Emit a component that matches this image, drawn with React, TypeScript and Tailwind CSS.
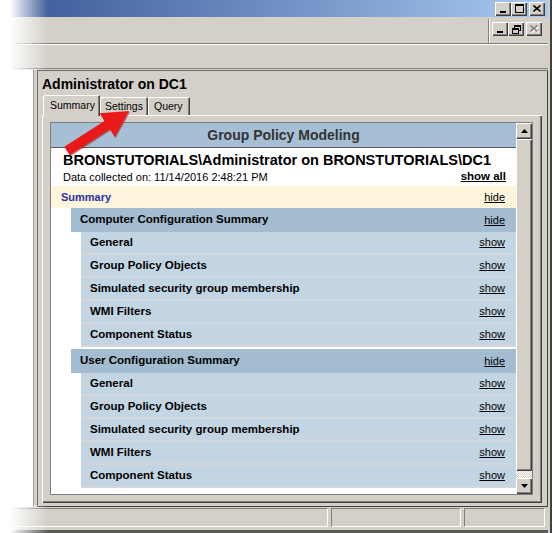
import React from "react";

// classic 3D bevels
const raised =
  "bg-[#d4d0c8] shadow-[inset_1px_1px_#ffffff,inset_-1px_-1px_#404040,inset_-2px_-2px_#808080]";
const sunken = "border border-t-[#808080] border-l-[#808080] border-b-white border-r-white";

const items = [
  "General",
  "Group Policy Objects",
  "Simulated security group membership",
  "WMI Filters",
  "Component Status",
];

function CaptionButton({ children }: { children: React.ReactNode }) {
  return (
    <div className={`w-[16px] h-[14px] flex items-center justify-center ${raised}`}>
      {children}
    </div>
  );
}

const MinGlyph = () => (
  <svg width="8" height="8" viewBox="0 0 8 8">
    <rect x="1" y="6" width="6" height="2" fill="#000" />
  </svg>
);

const MaxGlyph = () => (
  <svg width="9" height="9" viewBox="0 0 9 9">
    <rect x="0.5" y="0.5" width="8" height="8" fill="none" stroke="#000" />
    <rect x="0" y="0" width="9" height="2" fill="#000" />
  </svg>
);

const RestoreGlyph = () => (
  <svg width="9" height="9" viewBox="0 0 9 9">
    <rect x="2.5" y="0.5" width="6" height="5" fill="none" stroke="#000" />
    <rect x="2" y="0" width="7" height="2" fill="#000" />
    <rect x="0.5" y="3.5" width="6" height="5" fill="#d4d0c8" stroke="#000" />
    <rect x="0" y="3" width="7" height="2" fill="#000" />
  </svg>
);

const CloseGlyph = ({ disabled }: { disabled?: boolean }) => (
  <svg width="9" height="8" viewBox="0 0 9 8">
    {disabled && (
      <path d="M1.5 1.5 L8.5 7.5 M8.5 1.5 L1.5 7.5" stroke="#fff" strokeWidth="1.6" />
    )}
    <path
      d="M0.5 0.5 L7.5 6.5 M7.5 0.5 L0.5 6.5"
      stroke={disabled ? "#808080" : "#000"}
      strokeWidth="1.6"
    />
  </svg>
);

const Arrow = ({ up }: { up?: boolean }) => (
  <svg width="7" height="4" viewBox="0 0 7 4">
    <path d={up ? "M3.5 0 L7 4 L0 4Z" : "M0 0 L7 0 L3.5 4Z"} fill="#000" />
  </svg>
);

function Section({ title }: { title: string }) {
  return (
    <div className="ml-[20px]">
      <div className="h-[24px] flex items-center justify-between bg-[#a3bcd0] pl-[9px] pr-[11px]">
        <span className="font-bold text-[11.5px]">{title}</span>
        <span className="underline text-[11px]">hide</span>
      </div>
      <div className="ml-[10px]">
        {items.map((item) => (
          <div
            key={item}
            className="h-[23px] border-b-2 border-[#d3d7db] bg-[#c3d5e3] flex items-center justify-between pl-[9px] pr-[11px]"
          >
            <span className="font-bold text-[11.5px]">{item}</span>
            <span className="underline text-[11px]">show</span>
          </div>
        ))}
      </div>
    </div>
  );
}

export default function App() {
  return (
    <div className="relative w-[552px] h-[533px] overflow-hidden bg-[#d4d0c8] flex font-['Liberation_Sans',Arial,sans-serif] text-black">
      <div className="w-[548px] flex flex-col">
        {/* Title bar */}
        <div className="h-[17px] bg-linear-to-r from-[#3a5896] to-[#a8caf0] flex items-center justify-end gap-[2px] pr-[3px]">
          <div className="flex">
            <CaptionButton><MinGlyph /></CaptionButton>
            <CaptionButton><MaxGlyph /></CaptionButton>
          </div>
          <CaptionButton><CloseGlyph /></CaptionButton>
        </div>
        <div className="h-[2px]" />

        {/* Menu bar */}
        <div className="h-[25px] border-b border-[#808080] flex justify-end">
          <div className="border-l border-[#808080] shadow-[inset_1px_0_#ffffff] pl-[3px] pr-[6px] pt-[3px] flex gap-[2px] items-start">
            <div className="flex">
              <CaptionButton><MinGlyph /></CaptionButton>
              <CaptionButton><RestoreGlyph /></CaptionButton>
            </div>
            <CaptionButton><CloseGlyph disabled /></CaptionButton>
          </div>
        </div>

        {/* Toolbar */}
        <div className="h-[25px] border-t border-white border-b border-b-[#808080]" />

        {/* Main area */}
        <div className="h-[438px] flex pt-[1px]">
          <div className="w-[34px] bg-white border-r border-[#a0a0a0]" />
          <div className="w-[3px]" />
          <div className="w-[511px] shadow-[inset_1px_1px_#6a6a6a,inset_-1px_-1px_#404040] pt-[5px] pl-[5px]">
            <div className="text-[14px] leading-[18px] font-bold">Administrator on DC1</div>

            {/* Tabs */}
            <div className="mt-[2px] h-[20px] flex items-end pl-[1px] text-[10.5px]">
              <div className="relative z-10 -mb-[1px] h-[21px] w-[57px] bg-[#d4d0c8] rounded-t-[2px] shadow-[inset_1px_1px_#ffffff,inset_-1px_0_#404040,inset_-2px_0_#808080] pl-[7px] pt-[3px]">
                Summary
              </div>
              <div className="h-[18px] w-[48px] rounded-t-[2px] shadow-[inset_1px_1px_#ffffff,inset_-1px_0_#404040,inset_-2px_0_#808080] pl-[5px] pt-[2px]">
                Settings
              </div>
              <div className="h-[18px] w-[42px] rounded-t-[2px] shadow-[inset_1px_1px_#ffffff,inset_-1px_0_#404040,inset_-2px_0_#808080] pl-[6px] pt-[2px]">
                Query
              </div>
            </div>

            {/* Tab panel */}
            <div className={`w-[500px] h-[388px] pt-[7px] pl-[8px] ${raised}`}>
              <div className="w-[483px] h-[373px] border border-[#808080] bg-white flex">
                <div className="w-[465px] flex flex-col">
                  <div className="h-[25px] bg-[#a6bfd4] border-b border-[#5a5a5a] flex items-center justify-center text-[14px] font-bold text-[#333333]">
                    Group Policy Modeling
                  </div>
                  <div className="h-[38px] pl-[12px] pr-[10px] pt-[3px]">
                    <div className="text-[14.5px] leading-[18px] font-bold">
                      BRONSTUTORIALS\Administrator on BRONSTUTORIALS\DC1
                    </div>
                    <div className="h-[16px] flex items-center justify-between">
                      <span className="text-[11px]">Data collected on: 11/14/2016 2:48:21 PM</span>
                      <span className="text-[11.5px] font-bold underline">show all</span>
                    </div>
                  </div>
                  <div className="h-[22px] bg-[#fdf6dc] flex items-center justify-between pl-[10px] pr-[11px]">
                    <span className="text-[11px] font-bold text-[#2e2ea0]">Summary</span>
                    <span className="text-[11px] underline">hide</span>
                  </div>
                  <Section title="Computer Configuration Summary" />
                  <div className="h-[2px]" />
                  <Section title="User Configuration Summary" />
                </div>

                {/* Scrollbar */}
                <div className="w-[16px] flex flex-col">
                  <div className={`h-[16px] flex items-center justify-center ${raised}`}>
                    <Arrow up />
                  </div>
                  <div className={`h-[332px] ${raised}`} />
                  <div className="h-[7px] bg-[repeating-conic-gradient(#ffffff_0_25%,#d4d0c8_0_50%)] bg-size-[2px_2px]" />
                  <div className={`h-[16px] flex items-center justify-center ${raised}`}>
                    <Arrow />
                  </div>
                </div>
              </div>
            </div>
          </div>
        </div>

        {/* Status bar */}
        <div className="h-[21px] pt-[1px] flex gap-[3px] pl-[2px]">
          <div className={`w-[326px] h-[19px] ${sunken}`} />
          <div className={`w-[130px] h-[19px] ${sunken}`} />
          <div className={`w-[81px] h-[19px] ${sunken}`} />
        </div>
        <div className="h-[2px]" />
        <div className="h-[3px] bg-[#5a5a5a]" />
      </div>

      {/* Window frame, right edge */}
      <div className="w-[4px] border-r-2 border-[#404040]" />

      {/* Faded left edge of the screenshot */}
      <div className="absolute left-0 top-0 w-[48px] h-[70px] bg-linear-to-r from-white from-20% to-transparent" />
      <div className="absolute left-0 bottom-0 w-[48px] h-[28px] bg-linear-to-r from-white from-20% to-transparent" />

      {/* Red callout arrow pointing at the Settings tab */}
      <svg className="absolute left-0 top-0 pointer-events-none" width="552" height="533">
        <polygon
          points="65.3,147.8 105.5,121.9 100.6,114.3 130,112 115.8,137.9 110.9,130.3 70.7,156.2"
          fill="#7a0000"
          opacity="0.45"
        />
        <polygon
          points="64.3,146.8 104.5,120.9 99.6,113.3 129,111 114.8,136.9 109.9,129.3 69.7,155.2"
          fill="#ea1a1a"
        />
      </svg>
    </div>
  );
}
